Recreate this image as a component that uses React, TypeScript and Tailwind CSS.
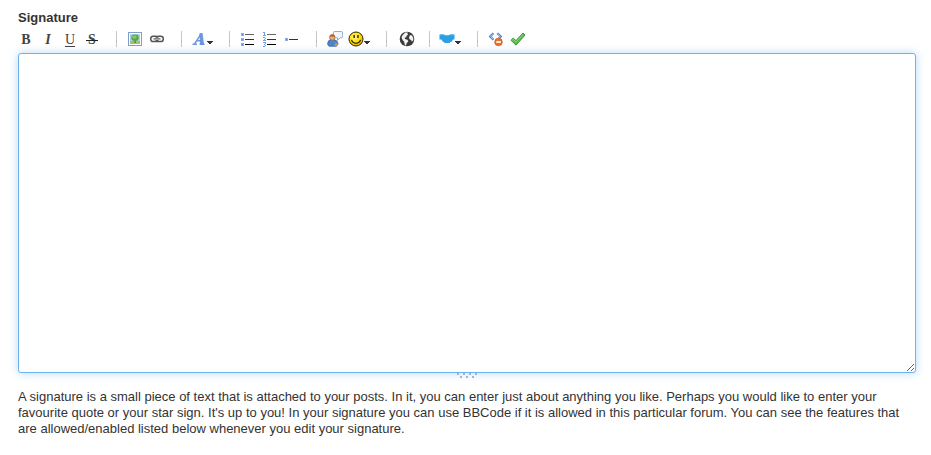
import type { ReactNode } from "react";

function ToolButton({ label, children, menu, className = "" }: { label: string; children: ReactNode; menu?: boolean; className?: string }) {
  if (menu) {
    return (
      <button type="button" title={label} aria-label={label} aria-haspopup="menu" className="flex h-6 w-[27px] items-center justify-center">
        {children}
        <svg width="7" height="16" viewBox="0 0 7 16" shapeRendering="crispEdges">
          <path d="M0 10h6v1H5v1H4v1H2v-1H1v-1H0z" fill="#333" />
        </svg>
      </button>
    );
  }
  return (
    <button type="button" title={label} aria-label={label} className={`flex h-6 w-[22px] items-center justify-center ${className}`}>
      {children}
    </button>
  );
}

function Icon({ children, crisp }: { children: ReactNode; crisp?: boolean }) {
  return (
    <svg width="16" height="16" viewBox="0 0 16 16" fill="none" className="shrink-0" shapeRendering={crisp ? "crispEdges" : "auto"}>
      {children}
    </svg>
  );
}

function Separator() {
  return (
    <svg width="1" height="16" viewBox="0 0 1 16" className="mr-[7px] ml-[13px] shrink-0" shapeRendering="crispEdges">
      <path d="M0 0h1v16H0z" fill="#c8c8c8" />
      <path d="M0 10h1v1H0z" fill="#d9a066" />
    </svg>
  );
}

const ImageIcon = () => (
  <Icon>
    <rect x="1.5" y="1.5" width="13" height="13" fill="#fff" stroke="#7f9fc6" />
    <path d="M3 3h10v10H3z" fill="#a9cdf0" />
    <path d="M3 10h10v3H3z" fill="#9bc66c" />
    <path d="M7.4 8h1.3v4H7.4z" fill="#7a6a3c" />
    <ellipse cx="8" cy="6.8" rx="3.7" ry="3.2" fill="#5aa637" />
    <ellipse cx="7.4" cy="6" rx="2.2" ry="1.7" fill="#86c95c" />
  </Icon>
);

const LinkIcon = () => (
  <Icon>
    <rect x="1.7" y="5.2" width="7.3" height="5.3" rx="2.6" stroke="#555" strokeWidth="1.5" />
    <rect x="7" y="5.2" width="7.3" height="5.3" rx="2.6" stroke="#555" strokeWidth="1.5" />
    <path d="M4.5 7.9h7" stroke="#fff" strokeWidth="2.2" />
    <path d="M4.5 7.9h7" stroke="#555" strokeWidth="1.2" />
  </Icon>
);

const FontIcon = () => (
  <Icon>
    <path d="M1.5 13.3H6M8.5 13.3h5M3.5 13 10 3.2M5.5 9.8h5" stroke="#6c9ae0" strokeWidth="1.5" />
    <path d="M8.800 2.500h2.500l1.200 10.500H9.500z" fill="#6c9ae0" stroke="#5485d2" strokeWidth=".6" />
  </Icon>
);

const BulletListIcon = () => (
  <Icon crisp>
    <path d="M1 2h3v3H1zM1 7h3v3H1zM1 12h3v3H1z" fill="#84aeea" />
    <path d="M2 3h1v1H2zM2 8h1v1H2zM2 13h1v1H2z" fill="#5f8fd8" />
    <path d="M5 3h9v1H5z" fill="#666" />
    <path d="M5 8h9v1H5z" fill="#333" />
    <path d="M5 13h9v1H5z" fill="#000" />
  </Icon>
);

const NumberListIcon = () => (
  <Icon crisp>
    <path
      d="M2 1h1v3H2zM1 1h1v1H1zM1 4h3v1H1zM1 6h2v1H1zM3 7h1v1H3zM2 8h1v1H2zM1 9h3v1H1zM1 11h3v1H1zM3 12h1v1H3zM2 13h1v1H2zM3 14h1v1H3zM1 15h2v1H1z"
      fill="#6f9ee6"
    />
    <path d="M5 3h9v1H5z" fill="#666" />
    <path d="M5 8h9v1H5z" fill="#333" />
    <path d="M5 13h9v1H5z" fill="#000" />
  </Icon>
);

const RuleIcon = () => (
  <Icon crisp>
    <path d="M1 7h3v3H1z" fill="#84aeea" />
    <path d="M2 8h1v1H2z" fill="#5f8fd8" />
    <path d="M5 8h9v1H5z" fill="#333" />
  </Icon>
);

const QuoteIcon = () => (
  <Icon>
    <path d="M7.500.5h6.700q1.400 0 1.400 1.400v3.500q0 1.400-1.400 1.400h-.9L10.500 9.300V6.800H8Q6.300 6.700 6.300 5.200V1.800Q6.300.5 7.500.5z" fill="#f0f6fd" stroke="#7da6dc" strokeWidth=".9" />
    <path d="M.6 13.200q0-4.200 3.300-4.700h2.800q3.700.6 4.500 4.300l-1.800 2.500H2z" fill="#4a86cf" stroke="#2e5f9f" strokeWidth=".7" />
    <path d="M8 12.200l2.800-.3-.4 2.300-3 .7z" fill="#e98b3c" />
    <circle cx="5.300" cy="6.500" r="2.700" fill="#f0ab6c" stroke="#a65f28" strokeWidth=".7" />
    <path d="M2.500 6.200q0-3 2.900-3 2.600.1 2.700 2.500-2.700.4-3.700-.5-.7.700-1.900 1z" fill="#b56327" />
  </Icon>
);

const SmileyIcon = () => (
  <Icon>
    <defs>
      <radialGradient id="smile" cx=".4" cy=".35" r=".65">
        <stop offset="0" stopColor="#fff67a" />
        <stop offset=".6" stopColor="#ffe000" />
        <stop offset="1" stopColor="#e8a800" />
      </radialGradient>
    </defs>
    <circle cx="8" cy="8" r="7" fill="url(#smile)" stroke="#302500" />
    <path d="M5.500 4h1.300v3H5.500zM9.300 4h1.300v3H9.300z" fill="#111" />
    <path d="M3.500 8.800q1.100 3.400 4.500 3.400t4.500-3.400" stroke="#111" strokeWidth="1.100" />
  </Icon>
);

const GlobeIcon = () => (
  <Icon>
    <circle cx="8" cy="8" r="7.300" fill="#3a3a3a" />
    <path d="M6.200 1.600 9 1.500l-.8 1.300 1 .8-1.900 1.300.3 1.100-2 .7.500 1.300 2.300.7 1 1.500-1.800 2-.6 2.500-1.400-1.300-.3-2.500L3.600 9.100 2.600 6.700l.6-2z" fill="#f2f2f2" />
    <path d="M11 4.100l2 .4 1.200 2.200.1 2.400-1.400 1.700-.8-1.800-1.600-.7-.5-2z" fill="#f2f2f2" />
  </Icon>
);

const HandshakeIcon = () => (
  <Icon>
    <path d="M.5 3.500h4.500l1.500.8h3.200l1.500-.8h4.300v5h-1.700l-.8 2-1.500.5-1 1H6l-2.600-1.700L2.500 8.500h-2z" fill="#2b9fe2" />
    <path d="M1 4h3.800l1.500.9h3.500l1.500-.9H15" stroke="#46aeea" strokeWidth=".8" />
  </Icon>
);

const SourceIcon = () => (
  <Icon>
    <path d="M5.400 2.300 2.200 5.500l3.300 3.200M9.300 2.300l3.500 3.200-2 2" stroke="#4a86d6" strokeWidth="2.200" />
    <path d="M5.200 2.500 2.500 5.500l2.700 2.700M9.500 2.500l2.800 3-1.500 1.500" stroke="#b4d1f5" strokeWidth=".8" />
    <circle cx="10.500" cy="11" r="3.800" fill="#ec722b" stroke="#c4541d" strokeWidth=".7" />
    <path d="M8.300 10.100h4.500v1.800H8.300z" fill="#fff" />
  </Icon>
);

const CheckIcon = () => (
  <Icon>
    <path d="M1 9.300 3.200 7l2.700 2.600L13 2l2 2L6 14.200z" fill="#5dba4c" stroke="#398c32" strokeWidth=".9" strokeLinejoin="round" />
    <path d="m2.300 9.100 1-.8 2.600 2.600 7.200-7.300" stroke="#9adb85" strokeWidth=".8" />
  </Icon>
);

function Toolbar() {
  return (
    <div role="toolbar" aria-label="Formatting" className="-ml-[3px] mt-px flex h-6 items-center font-['Liberation_Serif',serif] text-[14px] leading-4 text-[#444]">
      <ToolButton label="Bold" className="pt-0.5 font-bold">B</ToolButton>
      <ToolButton label="Italic" className="pt-0.5 font-bold italic">I</ToolButton>
      <ToolButton label="Underline" className="pt-0.5 underline underline-offset-2">U</ToolButton>
      <ToolButton label="Strikethrough" className="pt-0.5 font-bold">
        <span className="relative after:absolute after:-inset-x-0.5 after:top-2 after:h-px after:bg-[#222]">S</span>
      </ToolButton>
      <Separator />
      <ToolButton label="Insert image"><ImageIcon /></ToolButton>
      <ToolButton label="Insert link"><LinkIcon /></ToolButton>
      <Separator />
      <ToolButton label="Font" menu><FontIcon /></ToolButton>
      <Separator />
      <ToolButton label="Bulleted list"><BulletListIcon /></ToolButton>
      <ToolButton label="Numbered list"><NumberListIcon /></ToolButton>
      <ToolButton label="Horizontal rule"><RuleIcon /></ToolButton>
      <Separator />
      <ToolButton label="Quote"><QuoteIcon /></ToolButton>
      <ToolButton label="Smileys" menu><SmileyIcon /></ToolButton>
      <Separator />
      <ToolButton label="Website" className="pl-1"><GlobeIcon /></ToolButton>
      <Separator />
      <ToolButton label="More" menu><HandshakeIcon /></ToolButton>
      <Separator />
      <ToolButton label="Toggle source"><SourceIcon /></ToolButton>
      <ToolButton label="Check"><CheckIcon /></ToolButton>
    </div>
  );
}

export default function App() {
  return (
    <main className="bg-white pt-2.5 pr-[15px] pb-4 pl-[18px] font-['Liberation_Sans',Arial,sans-serif] text-[13px] leading-4 text-[#333]">
      <label htmlFor="signature" className="block font-bold">Signature</label>
      <Toolbar />
      <div className="mt-0.5">
        <textarea
          id="signature"
          className="block h-80 w-full resize-y rounded-[3px] border border-[#6db3ee] bg-white p-2 shadow-[0_0_8px_rgba(109,179,238,0.5)] outline-none"
        />
        <div className="relative flex h-4 justify-center">
          <svg width="22" height="5" viewBox="0 0 22 5" shapeRendering="crispEdges">
            <path d="M1 0h2v2H1zM7 0h2v2H7zM13 0h2v2h-2zM19 0h2v2h-2zM4 3h2v2H4zM10 3h2v2h-2zM16 3h2v2h-2z" fill="#a3b4c6" />
          </svg>
        </div>
      </div>
      <p>
        A signature is a small piece of text that is attached to your posts. In it, you can enter just about anything you like. Perhaps you would like to enter your
        favourite quote or your star sign. It's up to you! In your signature you can use BBCode if it is allowed in this particular forum. You can see the features that
        are allowed/enabled listed below whenever you edit your signature.
      </p>
    </main>
  );
}
